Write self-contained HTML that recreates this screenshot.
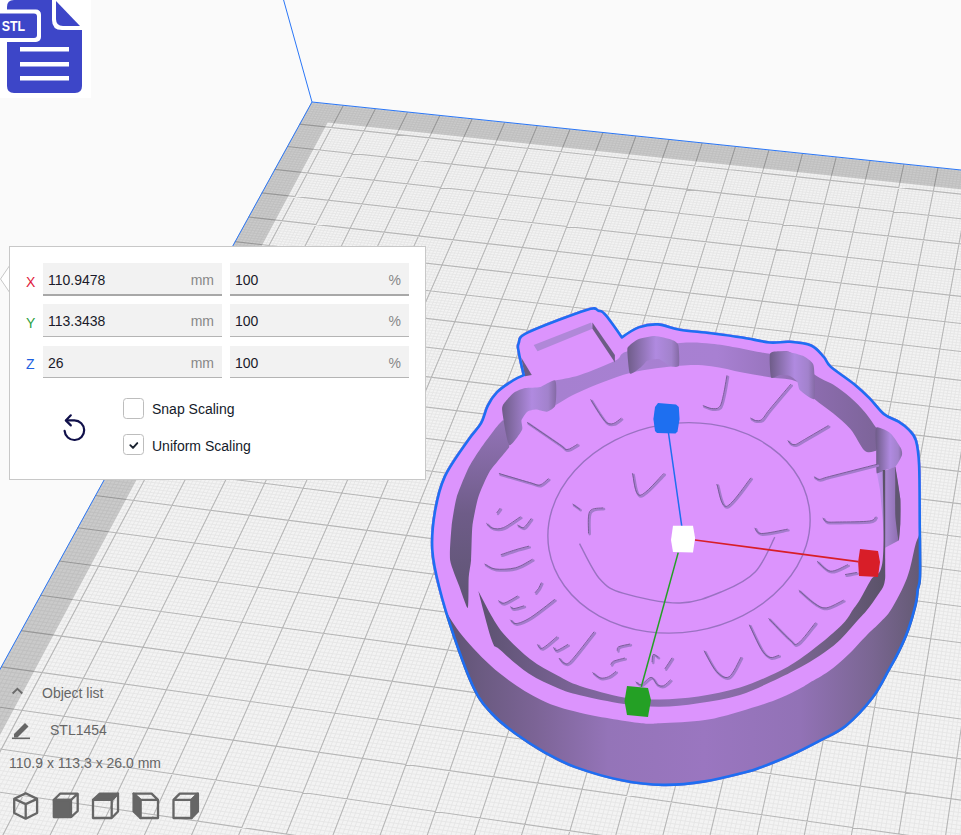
<!DOCTYPE html>
<html><head><meta charset="utf-8"><style>
html,body{margin:0;padding:0;width:961px;height:835px;overflow:hidden;background:#fafafa;font-family:"Liberation Sans",sans-serif;}
.abs{position:absolute;}
#panel{position:absolute;left:9px;top:246px;width:415px;height:232px;background:#fff;border:1px solid #c8c8c8;}
.fld{position:absolute;height:31px;background:#f2f2f2;border-bottom:2px solid #c4c4c4;box-sizing:content-box;}
.fld .v{position:absolute;left:5px;top:9px;font-size:14px;color:#1a1a2a;}
.fld .u{position:absolute;right:8px;top:9px;font-size:14px;color:#888;}
.lbl{position:absolute;font-size:14px;}
.cb{position:absolute;width:19px;height:19px;border:1.3px solid #bdbdbd;border-radius:3.5px;background:#fff;}
.ct{position:absolute;font-size:14px;color:#141a2a;}
.bl{position:absolute;font-size:14px;color:#666;}
</style></head><body>
<svg width="961" height="835" style="position:absolute;left:0;top:0">
<rect width="961" height="835" fill="#fafafa"/>
<polygon points="311.4,102.3 1684.1,245.8 2061.7,2282.7 -586.1,1735.0" fill="#f3f3f3"/>
<path d="M314.6 102.6L-580.4 1736.2M310.2 104.5L1684.6 248.3M317.8 103.0L-574.7 1737.4M309.0 106.6L1685.1 250.8M321.0 103.3L-569.0 1738.5M307.8 108.8L1685.5 253.3M324.1 103.6L-563.2 1739.7M306.6 111.0L1686.0 255.8M327.3 104.0L-557.5 1740.9M305.4 113.2L1686.5 258.4M330.5 104.3L-551.7 1742.1M304.2 115.3L1686.9 260.9M333.7 104.6L-546.0 1743.3M303.0 117.5L1687.4 263.5M336.9 105.0L-540.3 1744.5M301.8 119.7L1687.9 266.0M340.1 105.3L-534.5 1745.7M300.6 121.9L1688.4 268.6M346.5 106.0L-523.0 1748.1M298.2 126.4L1689.3 273.7M349.7 106.3L-517.2 1749.2M297.0 128.6L1689.8 276.3M352.9 106.6L-511.4 1750.4M295.7 130.8L1690.3 278.9M356.1 107.0L-505.7 1751.6M294.5 133.0L1690.7 281.5M359.3 107.3L-499.9 1752.8M293.3 135.3L1691.2 284.1M362.5 107.7L-494.1 1754.0M292.0 137.5L1691.7 286.7M365.7 108.0L-488.3 1755.2M290.8 139.7L1692.2 289.3M368.9 108.3L-482.5 1756.4M289.6 142.0L1692.7 291.9M372.1 108.7L-476.7 1757.6M288.3 144.2L1693.2 294.6M378.5 109.3L-465.1 1760.0M285.9 148.8L1694.1 299.8M381.8 109.7L-459.3 1761.2M284.6 151.0L1694.6 302.5M385.0 110.0L-453.5 1762.4M283.3 153.3L1695.1 305.2M388.2 110.3L-447.7 1763.6M282.1 155.6L1695.6 307.8M391.4 110.7L-441.9 1764.8M280.8 157.9L1696.1 310.5M394.6 111.0L-436.1 1766.0M279.6 160.2L1696.6 313.2M397.8 111.3L-430.2 1767.2M278.3 162.5L1697.1 315.8M401.0 111.7L-424.4 1768.4M277.0 164.8L1697.6 318.5M404.3 112.0L-418.6 1769.7M275.8 167.1L1698.1 321.2M410.7 112.7L-406.9 1772.1M273.2 171.7L1699.1 326.7M413.9 113.0L-401.1 1773.3M271.9 174.1L1699.6 329.4M417.1 113.4L-395.2 1774.5M270.7 176.4L1700.1 332.1M420.4 113.7L-389.3 1775.7M269.4 178.7L1700.6 334.8M423.6 114.0L-383.5 1776.9M268.1 181.1L1701.1 337.6M426.8 114.4L-377.6 1778.1M266.8 183.4L1701.7 340.3M430.0 114.7L-371.8 1779.3M265.5 185.8L1702.2 343.1M433.3 115.0L-365.9 1780.6M264.2 188.1L1702.7 345.8M436.5 115.4L-360.0 1781.8M262.9 190.5L1703.2 348.6M443.0 116.1L-348.3 1784.2M260.3 195.3L1704.2 354.2M446.2 116.4L-342.4 1785.4M259.0 197.7L1704.7 357.0M449.4 116.7L-336.5 1786.6M257.7 200.0L1705.3 359.8M452.7 117.1L-330.6 1787.9M256.3 202.4L1705.8 362.6M455.9 117.4L-324.7 1789.1M255.0 204.8L1706.3 365.4M459.2 117.7L-318.8 1790.3M253.7 207.3L1706.8 368.2M462.4 118.1L-312.9 1791.5M252.4 209.7L1707.3 371.1M465.6 118.4L-307.0 1792.7M251.0 212.1L1707.9 373.9M468.9 118.8L-301.1 1794.0M249.7 214.5L1708.4 376.7M475.4 119.4L-289.2 1796.4M247.0 219.4L1709.5 382.5M478.6 119.8L-283.3 1797.6M245.7 221.8L1710.0 385.3M481.9 120.1L-277.4 1798.9M244.3 224.3L1710.5 388.2M485.1 120.5L-271.4 1800.1M243.0 226.7L1711.1 391.1M488.3 120.8L-265.5 1801.3M241.6 229.2L1711.6 394.0M491.6 121.1L-259.5 1802.6M240.3 231.7L1712.1 396.9M494.9 121.5L-253.6 1803.8M238.9 234.2L1712.7 399.8M498.1 121.8L-247.6 1805.0M237.5 236.6L1713.2 402.7M501.4 122.2L-241.7 1806.2M236.2 239.1L1713.8 405.6M507.9 122.8L-229.8 1808.7M233.4 244.1L1714.8 411.5M511.1 123.2L-223.8 1809.9M232.1 246.6L1715.4 414.5M514.4 123.5L-217.8 1811.2M230.7 249.2L1715.9 417.4M517.6 123.9L-211.8 1812.4M229.3 251.7L1716.5 420.4M520.9 124.2L-205.9 1813.7M227.9 254.2L1717.0 423.4M524.2 124.5L-199.9 1814.9M226.5 256.7L1717.6 426.3M527.4 124.9L-193.9 1816.1M225.1 259.3L1718.1 429.3M530.7 125.2L-187.9 1817.4M223.7 261.8L1718.7 432.3M534.0 125.6L-181.9 1818.6M222.3 264.4L1719.3 435.3M540.5 126.3L-169.9 1821.1M219.5 269.5L1720.4 441.4M543.8 126.6L-163.9 1822.3M218.1 272.1L1720.9 444.4M547.0 126.9L-157.9 1823.6M216.6 274.7L1721.5 447.4M550.3 127.3L-151.9 1824.8M215.2 277.2L1722.1 450.5M553.6 127.6L-145.8 1826.1M213.8 279.8L1722.6 453.5M556.8 128.0L-139.8 1827.3M212.4 282.4L1723.2 456.6M560.1 128.3L-133.8 1828.6M210.9 285.0L1723.8 459.7M563.4 128.6L-127.7 1829.8M209.5 287.7L1724.3 462.8M566.7 129.0L-121.7 1831.1M208.1 290.3L1724.9 465.9M573.2 129.7L-109.6 1833.6M205.2 295.5L1726.1 472.1M576.5 130.0L-103.6 1834.8M203.7 298.2L1726.7 475.2M579.8 130.4L-97.5 1836.1M202.3 300.8L1727.2 478.3M583.1 130.7L-91.4 1837.3M200.8 303.5L1727.8 481.5M586.4 131.0L-85.4 1838.6M199.3 306.1L1728.4 484.6M589.7 131.4L-79.3 1839.8M197.9 308.8L1729.0 487.8M592.9 131.7L-73.2 1841.1M196.4 311.5L1729.6 490.9M596.2 132.1L-67.2 1842.3M194.9 314.2L1730.2 494.1M599.5 132.4L-61.1 1843.6M193.4 316.9L1730.7 497.3M606.1 133.1L-48.9 1846.1M190.5 322.3L1731.9 503.7M609.4 133.5L-42.8 1847.4M189.0 325.0L1732.5 506.9M612.7 133.8L-36.7 1848.6M187.5 327.7L1733.1 510.1M616.0 134.1L-30.6 1849.9M186.0 330.4L1733.7 513.3M619.3 134.5L-24.5 1851.2M184.5 333.1L1734.3 516.6M622.6 134.8L-18.4 1852.4M183.0 335.9L1734.9 519.8M625.9 135.2L-12.3 1853.7M181.5 338.6L1735.5 523.1M629.2 135.5L-6.2 1855.0M180.0 341.4L1736.1 526.3M632.5 135.9L-0.0 1856.2M178.4 344.1L1736.7 529.6M639.1 136.6L12.2 1858.8M175.4 349.7L1738.0 536.2M642.4 136.9L18.4 1860.0M173.9 352.5L1738.6 539.5M645.7 137.2L24.5 1861.3M172.3 355.3L1739.2 542.8M649.0 137.6L30.6 1862.6M170.8 358.1L1739.8 546.1M652.3 137.9L36.8 1863.9M169.3 360.9L1740.4 549.4M655.6 138.3L42.9 1865.1M167.7 363.7L1741.0 552.8M658.9 138.6L49.1 1866.4M166.2 366.5L1741.7 556.1M662.2 139.0L55.3 1867.7M164.6 369.3L1742.3 559.5M665.6 139.3L61.4 1869.0M163.0 372.2L1742.9 562.9M672.2 140.0L73.8 1871.5M159.9 377.9L1744.2 569.6M675.5 140.4L80.0 1872.8M158.3 380.7L1744.8 573.0M678.8 140.7L86.1 1874.1M156.8 383.6L1745.4 576.5M682.1 141.1L92.3 1875.3M155.2 386.5L1746.1 579.9M685.5 141.4L98.5 1876.6M153.6 389.4L1746.7 583.3M688.8 141.7L104.7 1877.9M152.0 392.2L1747.3 586.7M692.1 142.1L110.9 1879.2M150.4 395.1L1748.0 590.2M695.4 142.4L117.1 1880.5M148.8 398.1L1748.6 593.7M698.8 142.8L123.3 1881.8M147.2 401.0L1749.3 597.1M705.4 143.5L135.8 1884.3M144.0 406.8L1750.5 604.1M708.7 143.8L142.0 1885.6M142.4 409.8L1751.2 607.6M712.1 144.2L148.2 1886.9M140.8 412.7L1751.9 611.1M715.4 144.5L154.5 1888.2M139.1 415.7L1752.5 614.7M718.7 144.9L160.7 1889.5M137.5 418.6L1753.2 618.2M722.1 145.2L166.9 1890.8M135.9 421.6L1753.8 621.7M725.4 145.6L173.2 1892.1M134.2 424.6L1754.5 625.3M728.7 145.9L179.4 1893.4M132.6 427.6L1755.1 628.9M732.1 146.3L185.7 1894.7M130.9 430.6L1755.8 632.4M738.8 147.0L198.2 1897.2M127.6 436.6L1757.1 639.6M742.1 147.3L204.5 1898.5M126.0 439.6L1757.8 643.2M745.4 147.7L210.8 1899.8M124.3 442.6L1758.5 646.9M748.8 148.0L217.0 1901.1M122.6 445.7L1759.1 650.5M752.1 148.4L223.3 1902.4M121.0 448.7L1759.8 654.2M755.5 148.7L229.6 1903.7M119.3 451.8L1760.5 657.8M758.8 149.1L235.9 1905.0M117.6 454.8L1761.2 661.5M762.2 149.4L242.2 1906.3M115.9 457.9L1761.9 665.2M765.5 149.8L248.5 1907.6M114.2 461.0L1762.5 668.8M772.2 150.5L261.1 1910.3M110.8 467.2L1763.9 676.3M775.6 150.8L267.4 1911.6M109.1 470.3L1764.6 680.0M778.9 151.2L273.7 1912.9M107.4 473.4L1765.3 683.7M782.3 151.5L280.1 1914.2M105.7 476.5L1766.0 687.5M785.6 151.9L286.4 1915.5M103.9 479.7L1766.7 691.2M789.0 152.2L292.7 1916.8M102.2 482.8L1767.4 695.0M792.4 152.6L299.0 1918.1M100.5 486.0L1768.1 698.8M795.7 152.9L305.4 1919.4M98.7 489.1L1768.8 702.6M799.1 153.3L311.7 1920.7M97.0 492.3L1769.5 706.4M805.8 154.0L324.4 1923.4M93.5 498.7L1770.9 714.0M809.2 154.3L330.8 1924.7M91.7 501.9L1771.6 717.9M812.5 154.7L337.2 1926.0M90.0 505.1L1772.4 721.7M815.9 155.0L343.5 1927.3M88.2 508.3L1773.1 725.6M819.3 155.4L349.9 1928.6M86.4 511.5L1773.8 729.5M822.7 155.7L356.3 1929.9M84.7 514.7L1774.5 733.4M826.0 156.1L362.7 1931.3M82.9 518.0L1775.2 737.3M829.4 156.4L369.0 1932.6M81.1 521.2L1776.0 741.2M832.8 156.8L375.4 1933.9M79.3 524.5L1776.7 745.1M839.5 157.5L388.2 1936.6M75.7 531.1L1778.1 753.0M842.9 157.9L394.6 1937.9M73.9 534.4L1778.9 757.0M846.3 158.2L401.0 1939.2M72.1 537.7L1779.6 761.0M849.7 158.6L407.4 1940.5M70.3 541.0L1780.4 764.9M853.1 158.9L413.9 1941.9M68.4 544.3L1781.1 768.9M856.4 159.3L420.3 1943.2M66.6 547.6L1781.8 773.0M859.8 159.6L426.7 1944.5M64.8 551.0L1782.6 777.0M863.2 160.0L433.1 1945.8M62.9 554.3L1783.3 781.0M866.6 160.3L439.6 1947.2M61.1 557.7L1784.1 785.1M873.4 161.0L452.5 1949.8M57.4 564.4L1785.6 793.2M876.8 161.4L458.9 1951.2M55.5 567.8L1786.4 797.3M880.2 161.7L465.4 1952.5M53.6 571.2L1787.1 801.5M883.6 162.1L471.8 1953.8M51.8 574.6L1787.9 805.6M886.9 162.5L478.3 1955.2M49.9 578.0L1788.7 809.7M890.3 162.8L484.8 1956.5M48.0 581.5L1789.4 813.9M893.7 163.2L491.2 1957.9M46.1 584.9L1790.2 818.0M897.1 163.5L497.7 1959.2M44.2 588.3L1791.0 822.2M900.5 163.9L504.2 1960.5M42.3 591.8L1791.8 826.4M907.3 164.6L517.2 1963.2M38.5 598.8L1793.3 834.8M910.7 164.9L523.7 1964.6M36.6 602.3L1794.1 839.0M914.1 165.3L530.2 1965.9M34.6 605.8L1794.9 843.3M917.6 165.7L536.7 1967.3M32.7 609.3L1795.7 847.6M921.0 166.0L543.2 1968.6M30.8 612.8L1796.5 851.8M924.4 166.4L549.7 1970.0M28.8 616.3L1797.3 856.1M927.8 166.7L556.2 1971.3M26.9 619.9L1798.1 860.4M931.2 167.1L562.8 1972.7M24.9 623.4L1798.9 864.7M934.6 167.4L569.3 1974.0M23.0 627.0L1799.7 869.1M941.4 168.2L582.4 1976.7M19.0 634.2L1801.3 877.8M944.8 168.5L588.9 1978.1M17.0 637.8L1802.1 882.2M948.3 168.9L595.5 1979.4M15.1 641.4L1802.9 886.5M951.7 169.2L602.0 1980.8M13.1 645.0L1803.7 890.9M955.1 169.6L608.6 1982.1M11.1 648.6L1804.5 895.4M958.5 169.9L615.1 1983.5M9.1 652.3L1805.4 899.8M961.9 170.3L621.7 1984.8M7.1 655.9L1806.2 904.2M965.4 170.7L628.3 1986.2M5.0 659.6L1807.0 908.7M968.8 171.0L634.8 1987.6M3.0 663.3L1807.8 913.2M975.7 171.7L648.0 1990.3M-1.0 670.6L1809.5 922.2M979.1 172.1L654.6 1991.7M-3.1 674.4L1810.4 926.7M982.5 172.4L661.2 1993.0M-5.1 678.1L1811.2 931.3M985.9 172.8L667.8 1994.4M-7.2 681.8L1812.0 935.8M989.4 173.2L674.4 1995.8M-9.2 685.6L1812.9 940.4M992.8 173.5L681.0 1997.1M-11.3 689.3L1813.7 945.0M996.2 173.9L687.6 1998.5M-13.4 693.1L1814.6 949.6M999.7 174.2L694.3 1999.9M-15.5 696.9L1815.4 954.2M1003.1 174.6L700.9 2001.2M-17.5 700.7L1816.3 958.8M1010.0 175.3L714.1 2004.0M-21.7 708.3L1818.0 968.2M1013.4 175.7L720.8 2005.3M-23.8 712.1L1818.9 972.8M1016.9 176.0L727.4 2006.7M-25.9 715.9L1819.8 977.5M1020.3 176.4L734.1 2008.1M-28.1 719.8L1820.6 982.3M1023.8 176.8L740.7 2009.5M-30.2 723.7L1821.5 987.0M1027.2 177.1L747.4 2010.9M-32.3 727.5L1822.4 991.8M1030.7 177.5L754.1 2012.2M-34.5 731.4L1823.3 996.5M1034.1 177.8L760.7 2013.6M-36.6 735.3L1824.2 1001.3M1037.6 178.2L767.4 2015.0M-38.7 739.2L1825.1 1006.1M1044.5 178.9L780.8 2017.8M-43.1 747.1L1826.9 1015.8M1047.9 179.3L787.5 2019.1M-45.2 751.1L1827.8 1020.6M1051.4 179.6L794.2 2020.5M-47.4 755.0L1828.7 1025.5M1054.8 180.0L800.8 2021.9M-49.6 759.0L1829.6 1030.4M1058.3 180.4L807.6 2023.3M-51.8 763.0L1830.5 1035.3M1061.8 180.7L814.3 2024.7M-54.0 767.0L1831.4 1040.2M1065.2 181.1L821.0 2026.1M-56.2 771.0L1832.3 1045.1M1068.7 181.4L827.7 2027.5M-58.4 775.0L1833.2 1050.1M1072.1 181.8L834.4 2028.9M-60.6 779.1L1834.1 1055.0M1079.1 182.5L847.9 2031.6M-65.1 787.2L1836.0 1065.0M1082.5 182.9L854.6 2033.0M-67.4 791.3L1836.9 1070.1M1086.0 183.3L861.4 2034.4M-69.6 795.4L1837.9 1075.1M1089.5 183.6L868.1 2035.8M-71.9 799.5L1838.8 1080.2M1093.0 184.0L874.9 2037.2M-74.1 803.6L1839.7 1085.3M1096.4 184.3L881.6 2038.6M-76.4 807.7L1840.7 1090.4M1099.9 184.7L888.4 2040.0M-78.7 811.9L1841.6 1095.5M1103.4 185.1L895.1 2041.4M-81.0 816.0L1842.6 1100.6M1106.9 185.4L901.9 2042.8M-83.3 820.2L1843.5 1105.8M1113.8 186.2L915.5 2045.6M-87.9 828.6L1845.5 1116.1M1117.3 186.5L922.3 2047.0M-90.2 832.8L1846.4 1121.4M1120.8 186.9L929.1 2048.4M-92.5 837.0L1847.4 1126.6M1124.3 187.3L935.9 2049.8M-94.8 841.3L1848.4 1131.8M1127.7 187.6L942.7 2051.2M-97.2 845.5L1849.4 1137.1M1131.2 188.0L949.5 2052.7M-99.5 849.8L1850.3 1142.4M1134.7 188.3L956.3 2054.1M-101.9 854.1L1851.3 1147.7M1138.2 188.7L963.1 2055.5M-104.3 858.4L1852.3 1153.0M1141.7 189.1L969.9 2056.9M-106.6 862.7L1853.3 1158.4M1148.7 189.8L983.6 2059.7M-111.4 871.4L1855.3 1169.2M1152.2 190.2L990.4 2061.1M-113.8 875.8L1856.3 1174.6M1155.7 190.5L997.3 2062.5M-116.2 880.1L1857.3 1180.0M1159.2 190.9L1004.1 2064.0M-118.6 884.5L1858.3 1185.4M1162.7 191.3L1011.0 2065.4M-121.0 888.9L1859.3 1190.9M1166.2 191.6L1017.8 2066.8M-123.5 893.3L1860.3 1196.4M1169.7 192.0L1024.7 2068.2M-125.9 897.8L1861.4 1201.9M1173.2 192.4L1031.6 2069.6M-128.3 902.2L1862.4 1207.4M1176.7 192.7L1038.4 2071.1M-130.8 906.7L1863.4 1213.0M1183.7 193.5L1052.2 2073.9M-135.7 915.6L1865.5 1224.2M1187.2 193.8L1059.1 2075.3M-138.2 920.2L1866.5 1229.8M1190.7 194.2L1066.0 2076.8M-140.7 924.7L1867.6 1235.4M1194.2 194.6L1072.9 2078.2M-143.2 929.2L1868.6 1241.1M1197.7 194.9L1079.8 2079.6M-145.7 933.8L1869.7 1246.8M1201.2 195.3L1086.7 2081.0M-148.2 938.3L1870.7 1252.5M1204.7 195.7L1093.6 2082.5M-150.7 942.9L1871.8 1258.2M1208.3 196.0L1100.5 2083.9M-153.3 947.5L1872.9 1263.9M1211.8 196.4L1107.5 2085.3M-155.8 952.1L1873.9 1269.7M1218.8 197.1L1121.3 2088.2M-160.9 961.4L1876.1 1281.3M1222.3 197.5L1128.3 2089.6M-163.5 966.1L1877.2 1287.1M1225.8 197.9L1135.2 2091.1M-166.0 970.8L1878.2 1293.0M1229.4 198.2L1142.2 2092.5M-168.6 975.5L1879.3 1298.9M1232.9 198.6L1149.1 2094.0M-171.2 980.2L1880.4 1304.8M1236.4 199.0L1156.1 2095.4M-173.8 984.9L1881.5 1310.7M1239.9 199.3L1163.1 2096.8M-176.4 989.7L1882.6 1316.7M1243.5 199.7L1170.0 2098.3M-179.0 994.4L1883.7 1322.6M1247.0 200.1L1177.0 2099.7M-181.7 999.2L1884.9 1328.6M1254.1 200.8L1191.0 2102.6M-186.9 1008.8L1887.1 1340.7M1257.6 201.2L1198.0 2104.1M-189.6 1013.7L1888.2 1346.8M1261.1 201.6L1205.0 2105.5M-192.3 1018.5L1889.3 1352.9M1264.7 201.9L1212.0 2107.0M-194.9 1023.4L1890.5 1359.0M1268.2 202.3L1219.0 2108.4M-197.6 1028.2L1891.6 1365.1M1271.7 202.7L1226.0 2109.9M-200.3 1033.1L1892.8 1371.3M1275.3 203.0L1233.0 2111.3M-203.0 1038.1L1893.9 1377.5M1278.8 203.4L1240.0 2112.8M-205.7 1043.0L1895.1 1383.7M1282.4 203.8L1247.1 2114.2M-208.5 1048.0L1896.2 1389.9M1289.5 204.5L1261.1 2117.1M-213.9 1057.9L1898.5 1402.5M1293.0 204.9L1268.2 2118.6M-216.7 1062.9L1899.7 1408.8M1296.6 205.3L1275.2 2120.0M-219.5 1067.9L1900.9 1415.2M1300.1 205.6L1282.3 2121.5M-222.2 1073.0L1902.1 1421.5M1303.7 206.0L1289.4 2123.0M-225.0 1078.0L1903.3 1427.9M1307.2 206.4L1296.4 2124.4M-227.8 1083.1L1904.4 1434.3M1310.8 206.7L1303.5 2125.9M-230.6 1088.2L1905.6 1440.8M1314.3 207.1L1310.6 2127.4M-233.4 1093.3L1906.8 1447.3M1317.9 207.5L1317.7 2128.8M-236.2 1098.5L1908.0 1453.8M1325.0 208.2L1331.8 2131.8M-241.9 1108.8L1910.5 1466.8M1328.5 208.6L1338.9 2133.2M-244.8 1114.0L1911.7 1473.4M1332.1 209.0L1346.0 2134.7M-247.6 1119.2L1912.9 1480.0M1335.7 209.4L1353.2 2136.2M-250.5 1124.4L1914.1 1486.7M1339.2 209.7L1360.3 2137.6M-253.4 1129.7L1915.4 1493.3M1342.8 210.1L1367.4 2139.1M-256.3 1134.9L1916.6 1500.0M1346.4 210.5L1374.5 2140.6M-259.2 1140.2L1917.9 1506.7M1349.9 210.8L1381.7 2142.1M-262.1 1145.5L1919.1 1513.5M1353.5 211.2L1388.8 2143.5M-265.0 1150.9L1920.4 1520.2M1360.7 212.0L1403.1 2146.5M-270.9 1161.6L1922.9 1533.9M1364.2 212.3L1410.2 2148.0M-273.9 1167.0L1924.2 1540.7M1367.8 212.7L1417.4 2149.4M-276.9 1172.4L1925.4 1547.6M1371.4 213.1L1424.6 2150.9M-279.8 1177.8L1926.7 1554.5M1375.0 213.5L1431.7 2152.4M-282.8 1183.2L1928.0 1561.5M1378.5 213.8L1438.9 2153.9M-285.8 1188.7L1929.3 1568.4M1382.1 214.2L1446.1 2155.4M-288.9 1194.2L1930.6 1575.4M1385.7 214.6L1453.3 2156.9M-291.9 1199.7L1931.9 1582.5M1389.3 215.0L1460.5 2158.4M-294.9 1205.2L1933.2 1589.5M1396.4 215.7L1474.9 2161.3M-301.0 1216.4L1935.9 1603.8M1400.0 216.1L1482.1 2162.8M-304.1 1222.0L1937.2 1610.9M1403.6 216.5L1489.3 2164.3M-307.2 1227.6L1938.5 1618.1M1407.2 216.8L1496.5 2165.8M-310.3 1233.2L1939.8 1625.3M1410.8 217.2L1503.7 2167.3M-313.4 1238.9L1941.2 1632.6M1414.4 217.6L1511.0 2168.8M-316.5 1244.5L1942.5 1639.9M1418.0 218.0L1518.2 2170.3M-319.7 1250.2L1943.9 1647.2M1421.6 218.3L1525.4 2171.8M-322.8 1256.0L1945.3 1654.5M1425.2 218.7L1532.7 2173.3M-326.0 1261.7L1946.6 1661.9M1432.4 219.5L1547.2 2176.3M-332.3 1273.3L1949.4 1676.7M1436.0 219.8L1554.4 2177.8M-335.5 1279.1L1950.8 1684.2M1439.6 220.2L1561.7 2179.3M-338.7 1284.9L1952.2 1691.7M1443.2 220.6L1569.0 2180.8M-341.9 1290.8L1953.6 1699.2M1446.8 221.0L1576.3 2182.3M-345.2 1296.6L1955.0 1706.8M1450.4 221.3L1583.6 2183.8M-348.4 1302.5L1956.4 1714.4M1454.0 221.7L1590.8 2185.3M-351.7 1308.5L1957.8 1722.1M1457.6 222.1L1598.1 2186.8M-354.9 1314.4L1959.2 1729.7M1461.2 222.5L1605.4 2188.3M-358.2 1320.4L1960.6 1737.4M1468.5 223.2L1620.1 2191.4M-364.8 1332.4L1963.5 1753.0M1472.1 223.6L1627.4 2192.9M-368.2 1338.4L1965.0 1760.8M1475.7 224.0L1634.7 2194.4M-371.5 1344.5L1966.4 1768.6M1479.3 224.4L1642.0 2195.9M-374.8 1350.6L1967.9 1776.5M1482.9 224.7L1649.4 2197.4M-378.2 1356.7L1969.3 1784.4M1486.5 225.1L1656.7 2199.0M-381.6 1362.9L1970.8 1792.4M1490.2 225.5L1664.1 2200.5M-385.0 1369.0L1972.3 1800.4M1493.8 225.9L1671.4 2202.0M-388.4 1375.2L1973.8 1808.4M1497.4 226.3L1678.8 2203.5M-391.8 1381.4L1975.3 1816.4M1504.7 227.0L1693.5 2206.6M-398.6 1393.9L1978.3 1832.7M1508.3 227.4L1700.9 2208.1M-402.1 1400.2L1979.8 1840.8M1511.9 227.8L1708.3 2209.6M-405.6 1406.5L1981.3 1849.1M1515.6 228.1L1715.7 2211.1M-409.1 1412.9L1982.9 1857.3M1519.2 228.5L1723.0 2212.7M-412.6 1419.2L1984.4 1865.6M1522.8 228.9L1730.4 2214.2M-416.1 1425.6L1985.9 1873.9M1526.5 229.3L1737.8 2215.7M-419.6 1432.0L1987.5 1882.3M1530.1 229.7L1745.3 2217.3M-423.1 1438.5L1989.0 1890.7M1533.7 230.0L1752.7 2218.8M-426.7 1444.9L1990.6 1899.1M1541.0 230.8L1767.5 2221.9M-433.9 1458.0L1993.8 1916.1M1544.7 231.2L1775.0 2223.4M-437.5 1464.5L1995.3 1924.7M1548.3 231.6L1782.4 2225.0M-441.1 1471.1L1996.9 1933.3M1551.9 232.0L1789.8 2226.5M-444.7 1477.7L1998.5 1941.9M1555.6 232.3L1797.3 2228.0M-448.3 1484.3L2000.1 1950.6M1559.2 232.7L1804.7 2229.6M-452.0 1491.0L2001.8 1959.3M1562.9 233.1L1812.2 2231.1M-455.7 1497.7L2003.4 1968.1M1566.5 233.5L1819.7 2232.7M-459.4 1504.4L2005.0 1976.9M1570.2 233.9L1827.1 2234.2M-463.1 1511.1L2006.7 1985.8M1577.5 234.6L1842.1 2237.3M-470.5 1524.7L2010.0 2003.6M1581.2 235.0L1849.6 2238.9M-474.3 1531.5L2011.6 2012.6M1584.8 235.4L1857.1 2240.4M-478.1 1538.4L2013.3 2021.6M1588.5 235.8L1864.6 2242.0M-481.8 1545.2L2015.0 2030.7M1592.1 236.2L1872.1 2243.5M-485.6 1552.2L2016.7 2039.8M1595.8 236.5L1879.6 2245.1M-489.5 1559.1L2018.4 2048.9M1599.5 236.9L1887.1 2246.6M-493.3 1566.1L2020.1 2058.1M1603.1 237.3L1894.7 2248.2M-497.1 1573.1L2021.8 2067.4M1606.8 237.7L1902.2 2249.7M-501.0 1580.1L2023.5 2076.6M1614.1 238.5L1917.3 2252.9M-508.8 1594.3L2027.0 2095.4M1617.8 238.8L1924.8 2254.4M-512.7 1601.4L2028.7 2104.8M1621.5 239.2L1932.4 2256.0M-516.6 1608.5L2030.5 2114.2M1625.2 239.6L1939.9 2257.5M-520.6 1615.7L2032.2 2123.8M1628.8 240.0L1947.5 2259.1M-524.5 1622.9L2034.0 2133.3M1632.5 240.4L1955.1 2260.7M-528.5 1630.2L2035.8 2142.9M1636.2 240.8L1962.7 2262.2M-532.5 1637.4L2037.6 2152.6M1639.9 241.1L1970.2 2263.8M-536.5 1644.8L2039.4 2162.3M1643.5 241.5L1977.8 2265.4M-540.6 1652.1L2041.2 2172.1M1650.9 242.3L1993.0 2268.5M-548.7 1666.9L2044.8 2191.7M1654.6 242.7L2000.6 2270.1M-552.8 1674.3L2046.7 2201.6M1658.3 243.1L2008.2 2271.7M-556.9 1681.8L2048.5 2211.6M1662.0 243.4L2015.9 2273.2M-561.0 1689.3L2050.4 2221.6M1665.7 243.8L2023.5 2274.8M-565.2 1696.8L2052.2 2231.7M1669.3 244.2L2031.1 2276.4M-569.3 1704.4L2054.1 2241.8M1673.0 244.6L2038.8 2278.0M-573.5 1712.0L2056.0 2251.9M1676.7 245.0L2046.4 2279.6M-577.7 1719.6L2057.9 2262.1M1680.4 245.4L2054.1 2281.1M-581.9 1727.3L2059.8 2272.4" stroke="#e5e5e5" stroke-width="0.9" fill="none"/>
<path d="M343.3 105.6L-528.7 1746.9M299.4 124.1L1688.8 271.2M375.3 109.0L-470.9 1758.8M287.1 146.5L1693.7 297.2M407.5 112.3L-412.7 1770.9M274.5 169.4L1698.6 323.9M439.7 115.7L-354.1 1783.0M261.6 192.9L1703.7 351.4M472.1 119.1L-295.1 1795.2M248.4 217.0L1708.9 379.6M504.6 122.5L-235.7 1807.5M234.8 241.6L1714.3 408.6M537.2 125.9L-175.9 1819.9M220.9 266.9L1719.8 438.3M570.0 129.3L-115.7 1832.3M206.6 292.9L1725.5 469.0M602.8 132.8L-55.0 1844.9M192.0 319.6L1731.3 500.5M635.8 136.2L6.1 1857.5M176.9 346.9L1737.3 532.9M668.9 139.7L67.6 1870.2M161.5 375.0L1743.5 566.3M702.1 143.1L129.6 1883.0M145.6 403.9L1749.9 600.6M735.4 146.6L192.0 1895.9M129.3 433.6L1756.5 636.0M768.9 150.1L254.8 1908.9M112.5 464.1L1763.2 672.5M802.5 153.6L318.1 1922.0M95.3 495.5L1770.2 710.2M836.2 157.1L381.8 1935.2M77.5 527.8L1777.4 749.1M870.0 160.7L446.0 1948.5M59.2 561.0L1784.9 789.2M903.9 164.2L510.7 1961.9M40.4 595.3L1792.5 830.6M938.0 167.8L575.8 1975.4M21.0 630.6L1800.5 873.4M972.2 171.4L641.4 1988.9M1.0 666.9L1808.7 917.7M1006.6 175.0L707.5 2002.6M-19.6 704.5L1817.2 963.5M1041.0 178.6L774.1 2016.4M-40.9 743.2L1826.0 1010.9M1075.6 182.2L841.1 2030.2M-62.9 783.1L1835.1 1060.0M1110.3 185.8L908.7 2044.2M-85.6 824.4L1844.5 1111.0M1145.2 189.4L976.8 2058.3M-109.0 867.0L1854.3 1163.8M1180.2 193.1L1045.3 2072.5M-133.3 911.1L1864.4 1218.6M1215.3 196.8L1114.4 2086.8M-158.3 956.8L1875.0 1275.5M1250.5 200.5L1184.0 2101.2M-184.3 1004.0L1886.0 1334.7M1285.9 204.2L1254.1 2115.7M-211.2 1052.9L1897.4 1396.2M1321.4 207.9L1324.8 2130.3M-239.1 1103.6L1909.3 1460.3M1357.1 211.6L1395.9 2145.0M-268.0 1156.2L1921.6 1527.0M1392.9 215.3L1467.7 2159.8M-298.0 1210.8L1934.5 1596.6M1428.8 219.1L1539.9 2174.8M-329.1 1267.5L1948.0 1669.3M1464.8 222.8L1612.8 2189.9M-361.5 1326.4L1962.1 1745.2M1501.0 226.6L1686.1 2205.0M-395.2 1387.7L1976.8 1824.5M1537.4 230.4L1760.1 2220.3M-430.3 1451.4L1992.2 1907.6M1573.9 234.2L1834.6 2235.8M-466.8 1517.9L2008.3 1994.7M1610.5 238.1L1909.7 2251.3M-504.9 1587.2L2025.2 2086.0M1647.2 241.9L1985.4 2267.0M-544.6 1659.5L2043.0 2181.9" stroke="#b6b6b6" stroke-width="1.1" fill="none"/>
<path d="M311.4 102.3 L1684.1 245.8 L2061.7 2282.7 L-586.1 1735.0Z M327.6 122.5 L-540.3 1744.5 L2061.7 2282.7 L1687.9 266.0Z" fill="rgba(0,0,0,0.17)" fill-rule="evenodd"/>
<path d="M1684.1 245.8L312 102L-586.1 1735.0M283.6 0L312 102" stroke="#2a76f6" stroke-width="1" fill="none"/>
<defs>
<linearGradient id="wall" x1="440" y1="0" x2="920" y2="0" gradientUnits="userSpaceOnUse">
<stop offset="0" stop-color="#5c5270"/><stop offset="0.08" stop-color="#6a5a80"/><stop offset="0.2" stop-color="#7c6496"/><stop offset="0.35" stop-color="#9474b8"/><stop offset="0.55" stop-color="#9a76c0"/><stop offset="0.75" stop-color="#9272b6"/><stop offset="0.9" stop-color="#7a6692"/><stop offset="1" stop-color="#645a74"/></linearGradient>
<linearGradient id="band2" x1="478" y1="0" x2="886" y2="0" gradientUnits="userSpaceOnUse">
<stop offset="0" stop-color="#5c5270"/><stop offset="0.25" stop-color="#7c6498"/><stop offset="0.5" stop-color="#9070b4"/><stop offset="0.75" stop-color="#806898"/><stop offset="1" stop-color="#5a5268"/></linearGradient>
<linearGradient id="bwall" x1="555" y1="0" x2="880" y2="0" gradientUnits="userSpaceOnUse">
<stop offset="0" stop-color="#a680d0"/><stop offset="0.5" stop-color="#a880d2"/><stop offset="0.8" stop-color="#8c6cae"/><stop offset="1" stop-color="#7c6498"/></linearGradient>
<linearGradient id="cres" x1="0" y1="420" x2="0" y2="608" gradientUnits="userSpaceOnUse">
<stop offset="0" stop-color="#9474b8"/><stop offset="0.5" stop-color="#6e5c88"/><stop offset="1" stop-color="#5e5472"/></linearGradient>
<linearGradient id="rw" x1="877" y1="0" x2="900" y2="0" gradientUnits="userSpaceOnUse">
<stop offset="0" stop-color="#c590f2"/><stop offset="0.4" stop-color="#a886d0"/><stop offset="1" stop-color="#8a6cac"/></linearGradient>
<linearGradient id="post" x1="0" y1="0" x2="1" y2="0">
<stop offset="0" stop-color="#6e5c88"/><stop offset="0.55" stop-color="#b08ae0"/><stop offset="0.85" stop-color="#a282cc"/><stop offset="1" stop-color="#846aa4"/></linearGradient>
</defs>
<path d="M517.5 342.5C519.2 339.0 516.0 336.8 527.5 331.2C539.0 325.6 574.3 312.3 586.2 308.7C598.1 305.1 595.4 308.6 598.7 309.4C602.0 310.2 602.2 309.2 606.2 313.7C610.2 318.2 622.4 336.2 622.4 336.2C622.4 336.2 632.4 328.4 638.3 326.2C644.2 324.0 651.0 322.7 658.0 323.1C665.0 323.5 671.1 327.0 680.0 328.5C688.9 330.0 700.8 330.6 711.2 331.9C721.6 333.2 732.6 334.6 742.4 336.2C752.2 337.8 762.0 340.5 769.9 341.2C777.8 341.9 783.0 340.0 790.0 340.5C797.0 341.0 805.9 341.8 811.6 344.3C817.4 346.9 821.1 352.2 824.5 355.8C827.9 359.4 826.7 361.3 831.7 365.9C836.7 370.4 848.2 377.8 854.7 383.1C861.2 388.4 865.5 392.5 870.5 397.5C875.5 402.5 880.1 409.5 884.9 413.3C889.7 417.1 895.0 417.9 899.2 420.5C903.4 423.1 907.0 425.9 910.0 429.1C913.0 432.4 915.4 434.0 917.1 440.0C918.8 446.0 919.8 451.7 920.4 465.0C921.0 478.3 920.9 501.7 921.0 520.0C921.1 538.3 921.6 563.3 921.3 575.0C921.0 586.7 919.7 585.1 919.0 590.0C918.3 594.9 918.6 597.7 917.0 604.4C915.4 611.1 912.2 622.3 909.4 630.2C906.6 638.1 903.2 645.4 900.0 652.0C896.8 658.6 894.6 662.2 890.2 670.0C885.8 677.8 880.6 689.1 873.4 698.6C866.1 708.1 855.6 719.5 846.7 726.7C837.8 733.9 829.5 737.0 820.0 742.0C810.5 747.0 800.0 752.5 790.0 757.0C780.0 761.5 767.2 766.3 760.0 769.0C752.8 771.7 755.7 771.0 746.5 773.3C737.3 775.6 718.8 780.6 704.9 782.7C691.0 784.9 677.1 786.4 663.2 786.2C649.3 786.0 636.3 784.6 621.6 781.6C606.9 778.6 587.8 772.9 575.0 768.3C562.2 763.7 554.9 759.6 544.8 753.9C534.7 748.2 523.3 740.8 514.3 734.2C505.3 727.6 497.8 721.9 490.9 714.4C484.0 706.9 479.3 702.2 473.0 689.3C466.7 676.4 458.8 654.1 453.0 637.2C447.2 620.3 441.7 602.3 438.0 587.8C434.3 573.3 431.7 562.7 431.0 550.0C430.3 537.3 431.5 524.1 433.6 511.8C435.7 499.4 438.2 487.9 443.7 475.9C449.2 463.9 460.6 448.9 466.7 440.0C472.8 431.1 476.7 428.3 480.0 422.5C483.3 416.7 483.8 410.5 486.5 405.3C489.2 400.1 491.9 395.6 496.2 391.3C500.5 387.0 507.9 382.1 512.3 379.4C516.7 376.7 522.5 374.9 522.5 374.9C522.5 374.9 518.3 357.8 517.5 352.4C516.7 347.0 515.8 346.0 517.5 342.5Z" fill="url(#wall)"/>
<path d="M517.5 342.5C519.2 339.0 516.0 336.8 527.5 331.2C539.0 325.6 574.3 312.3 586.2 308.7C598.1 305.1 595.4 308.6 598.7 309.4C602.0 310.2 602.2 309.2 606.2 313.7C610.2 318.2 622.4 336.2 622.4 336.2C622.4 336.2 632.4 328.4 638.3 326.2C644.2 324.0 651.0 322.7 658.0 323.1C665.0 323.5 671.1 327.0 680.0 328.5C688.9 330.0 700.8 330.6 711.2 331.9C721.6 333.2 732.6 334.6 742.4 336.2C752.2 337.8 762.0 340.5 769.9 341.2C777.8 341.9 783.0 340.0 790.0 340.5C797.0 341.0 805.9 341.8 811.6 344.3C817.4 346.9 821.1 352.2 824.5 355.8C827.9 359.4 826.7 361.3 831.7 365.9C836.7 370.4 848.2 377.8 854.7 383.1C861.2 388.4 865.5 392.5 870.5 397.5C875.5 402.5 880.1 409.5 884.9 413.3C889.7 417.1 895.0 417.9 899.2 420.5C903.4 423.1 907.0 425.9 910.0 429.1C913.0 432.4 915.4 434.0 917.1 440.0C918.8 446.0 919.8 451.7 920.4 465.0C921.0 478.3 921.2 508.3 921.0 520.0C920.8 531.7 919.9 530.8 919.0 535.0C918.1 539.2 917.4 537.8 915.4 545.0C913.4 552.2 911.0 567.4 907.0 578.0C903.0 588.6 896.1 601.3 891.6 608.7C887.1 616.1 884.1 618.1 880.0 622.5C875.9 626.9 872.4 629.5 867.0 634.9C861.6 640.3 854.3 648.9 847.9 655.0C841.5 661.1 835.1 666.7 828.7 671.3C822.3 675.9 814.4 679.9 809.6 682.8C804.8 685.7 805.7 685.6 800.0 688.5C794.3 691.4 785.4 696.2 775.4 700.0C765.4 703.8 751.7 708.1 740.0 711.4C728.3 714.7 718.3 718.0 705.0 720.0C691.7 722.0 671.2 722.8 660.0 723.2C648.8 723.7 650.8 724.5 637.5 722.7C624.2 721.0 596.0 716.5 580.0 712.7C564.0 708.9 554.5 706.5 541.2 700.0C527.9 693.5 512.5 683.6 500.0 673.6C487.4 663.6 474.9 650.4 465.9 640.0C456.9 629.6 450.6 619.7 446.0 611.0C441.4 602.3 440.5 598.0 438.0 587.8C435.5 577.6 431.7 562.7 431.0 550.0C430.3 537.3 431.5 524.1 433.6 511.8C435.7 499.4 438.2 487.9 443.7 475.9C449.2 463.9 460.6 448.9 466.7 440.0C472.8 431.1 476.7 428.3 480.0 422.5C483.3 416.7 483.8 410.5 486.5 405.3C489.2 400.1 491.9 395.6 496.2 391.3C500.5 387.0 507.9 382.1 512.3 379.4C516.7 376.7 522.5 374.9 522.5 374.9C522.5 374.9 518.3 357.8 517.5 352.4C516.7 347.0 515.8 346.0 517.5 342.5Z" fill="#dc94fd"/>
<path d="M555.4 380.5C559.5 379.6 570.0 378.4 580.0 375.1C590.0 371.8 607.4 364.6 615.4 360.6C623.4 356.6 617.1 354.1 627.9 351.2C638.7 348.3 666.1 344.4 680.0 343.1C693.9 341.9 701.8 343.0 711.2 343.7C720.6 344.4 726.4 345.8 736.2 347.5C746.0 349.2 760.9 352.9 769.9 353.7C778.9 354.5 782.6 348.7 790.0 352.2C797.4 355.7 807.2 369.1 814.4 374.5C821.6 379.9 827.1 380.8 833.1 384.6C839.1 388.4 845.1 392.9 850.4 397.5C855.7 402.1 860.4 406.9 864.7 411.9C869.0 416.9 874.3 425.1 876.2 427.7L876.2 450.7C874.3 450.7 869.0 454.3 864.7 450.7C860.4 447.1 855.7 435.3 850.4 429.1C845.1 422.9 839.1 418.3 833.1 413.3C827.1 408.3 820.4 404.2 814.4 398.9C808.4 393.6 804.4 385.3 797.2 381.7C790.0 378.1 780.3 378.9 771.2 377.4C762.1 375.9 752.4 374.4 742.4 372.5C732.4 370.6 721.6 367.3 711.2 366.2C700.8 365.1 693.5 364.6 680.0 365.8C666.5 367.0 646.7 368.8 630.0 373.1C613.3 377.4 592.4 386.4 580.0 391.8C567.6 397.2 559.5 403.1 555.4 405.3Z" fill="url(#bwall)"/>
<path d="M627.3 350.2C627.2 347.4 627.9 347.1 629.0 346.0C630.1 344.9 635.7 340.3 638.3 339.3C640.9 338.3 651.7 336.1 655.0 336.1C658.3 336.2 669.3 338.9 671.6 339.8C673.9 340.7 677.6 342.4 678.3 345.0C679.0 347.6 679.8 363.7 678.9 365.8C678.0 367.9 671.5 366.5 669.5 365.8C667.5 365.1 661.3 359.5 659.1 359.0C656.9 358.5 649.4 359.8 647.6 360.6C645.8 361.4 643.2 365.5 641.4 366.8C639.6 368.1 631.4 375.3 630.0 373.6C628.6 371.9 627.4 353.0 627.3 350.2Z" fill="url(#post)"/>
<path d="M770.0 353.7C770.9 351.1 778.0 351.3 780.0 351.2C782.0 351.1 787.7 351.7 790.0 352.2C792.3 352.7 800.7 354.8 802.9 355.8C805.1 356.8 810.5 360.8 811.6 362.0C812.7 363.2 813.7 364.3 814.0 368.0C814.3 371.7 815.8 396.7 814.4 398.9C813.0 401.1 801.7 392.0 800.0 390.3C798.3 388.6 798.2 383.1 797.2 381.7C796.2 380.3 791.7 376.7 790.0 376.0C788.3 375.3 781.9 374.9 780.0 375.0C778.1 375.1 772.2 379.5 771.2 377.4C770.2 375.3 769.1 356.3 770.0 353.7Z" fill="url(#post)"/>
<path d="M876.2 427.7C877.6 426.0 888.1 431.4 890.6 433.4C893.1 435.4 899.6 445.6 900.7 447.8C901.8 450.0 902.5 453.1 902.0 455.0C901.5 456.9 897.0 465.3 895.3 466.8C893.6 468.3 887.0 469.3 885.2 470.0C883.4 470.7 877.8 475.4 876.9 473.5C876.0 471.6 876.3 455.3 876.2 450.7C876.1 446.1 874.8 429.4 876.2 427.7Z" fill="url(#post)"/>
<path d="M503.2 420.3C506.1 419.9 508.7 442.1 509.1 445.1C509.5 448.1 508.9 447.4 507.0 450.0C505.1 452.6 492.6 466.9 489.7 471.6C486.8 476.4 479.9 492.0 478.2 497.5C476.5 503.0 473.1 520.0 472.4 526.2C471.7 532.5 471.5 554.9 471.1 560.0C470.7 565.1 469.0 572.4 468.7 577.2C468.4 582.0 468.8 607.0 467.8 607.9C466.9 608.8 461.0 590.7 459.2 585.9C457.4 581.1 450.9 566.0 450.1 560.0C449.3 554.0 451.0 532.5 451.6 526.2C452.2 520.0 455.0 503.2 456.6 497.5C458.2 491.8 465.8 473.5 468.1 468.7C470.4 463.9 476.5 454.2 480.0 449.4C483.5 444.6 500.3 420.7 503.2 420.3Z" fill="url(#cres)"/>
<path d="M502.1 409.6C501.8 405.2 504.7 402.7 505.9 401.0C507.1 399.3 512.6 393.6 514.5 392.3C516.4 391.0 522.7 388.5 525.3 388.0C527.9 387.5 537.3 387.6 540.3 386.9C543.3 386.1 553.9 378.7 555.4 380.5C556.9 382.3 556.3 402.2 555.4 405.3C554.5 408.4 548.7 411.3 546.8 411.7C544.9 412.1 537.9 409.6 536.0 409.6C534.1 409.6 528.9 410.6 527.4 411.7C525.9 412.8 522.0 418.5 521.5 420.3C521.0 422.1 523.2 427.5 522.0 430.0C520.8 432.5 511.1 447.1 509.1 445.1C507.1 443.1 502.4 414.0 502.1 409.6Z" fill="url(#post)"/>
<path d="M876.9 473.5 L895.3 466.8 L900.3 498.7 L900.3 523.8 L898.7 540.6 L884.6 548.0 L882.7 520.0 L880.0 490.0Z" fill="url(#rw)"/>
<path d="M895.3 466.8C895.8 468.5 899.8 493.0 900.3 498.7C900.8 504.4 900.5 519.6 900.3 523.8C900.1 528.0 899.2 541.4 898.7 540.6C898.2 539.8 895.6 521.3 895.3 515.4C895.0 509.5 895.3 486.8 895.3 481.9C895.3 477.0 894.8 465.1 895.3 466.8Z" fill="#605670"/>
<path d="M478.3 591.1C480.5 599.2 488.1 630.2 491.7 640.0C495.3 649.8 493.8 644.1 500.0 649.7C506.2 655.3 519.1 667.2 528.7 673.6C538.3 680.0 549.0 684.4 557.5 688.0C566.0 691.6 568.9 692.6 580.0 695.3C591.1 698.0 610.7 702.1 624.0 704.0C637.3 705.9 647.6 706.9 660.0 706.8C672.4 706.7 685.0 705.2 698.3 703.2C711.6 701.2 726.7 699.0 740.0 694.9C753.3 690.8 768.3 683.0 778.3 678.4C788.3 673.8 793.2 671.2 800.0 667.5C806.8 663.8 812.8 660.3 819.2 656.0C825.6 651.7 831.9 647.5 838.3 641.6C844.7 635.7 852.7 625.8 857.5 620.5C862.3 615.2 863.7 614.2 867.0 610.0C870.3 605.8 874.6 599.9 877.5 595.4C880.4 590.9 883.1 588.8 884.4 582.9C885.7 577.0 885.1 578.8 885.2 560.0C885.3 541.2 885.2 485.0 885.2 470.0L882.7 470.0C882.7 485.0 884.7 541.7 882.7 560.0C880.7 578.3 874.6 573.4 870.8 580.0C867.0 586.6 863.0 594.4 860.0 599.4C857.0 604.4 855.2 606.3 852.7 610.0C850.2 613.7 849.0 617.0 845.0 621.5C841.0 626.0 833.8 632.3 828.7 636.8C823.6 641.3 819.2 644.6 814.4 648.3C809.6 652.0 806.0 655.0 800.0 658.9C794.0 662.8 788.3 666.9 778.3 671.7C768.3 676.5 753.3 683.4 740.0 687.5C726.7 691.6 711.6 694.5 698.3 696.5C685.0 698.5 672.4 699.2 660.0 699.4C647.6 699.5 637.3 699.6 624.0 697.4C610.7 695.2 591.1 689.6 580.0 686.0C568.9 682.4 565.8 680.1 557.5 675.6C549.2 671.1 539.0 666.0 530.0 659.0C521.0 652.0 510.1 641.5 503.3 633.6C496.5 625.7 491.4 615.3 489.0 611.6Z" fill="url(#band2)"/>
<path d="M533.7 345.0 L591.2 322.5 L592.4 328.7 L537.5 351.2Z" fill="#b088d8"/>
<path d="M592.4 322.5 L614.9 354.9 L614.9 362.4 L592.4 328.7Z" fill="#6c5c84"/>
<path d="M521.2 357.4 L531.8 374.9 L525.0 376.2Z" fill="#6c5c84"/>
<path d="M518.7 343.1C520.2 339.7 516.8 337.9 528.1 332.4C539.4 326.8 574.9 313.6 586.6 309.9C598.3 306.3 595.3 309.9 598.4 310.7C601.5 311.4 601.3 310.1 605.2 314.6C609.2 319.0 621.9 337.4 621.9 337.4C621.9 337.4 632.7 329.6 638.7 327.4C644.7 325.3 651.1 324.0 657.9 324.4C664.8 324.8 670.9 328.3 679.8 329.8C688.6 331.2 700.6 331.9 711.0 333.2C721.4 334.5 732.4 335.9 742.2 337.5C752.0 339.0 761.8 341.8 769.8 342.5C777.7 343.2 783.0 341.3 789.9 341.8C796.8 342.3 805.5 343.0 811.1 345.5C816.7 348.0 820.3 353.1 823.5 356.7C826.8 360.2 825.8 362.3 830.8 366.9C835.9 371.4 847.4 378.8 853.9 384.1C860.3 389.4 864.5 393.4 869.6 398.4C874.6 403.5 879.3 410.5 884.1 414.3C888.9 418.2 894.3 419.0 898.5 421.6C902.7 424.2 906.2 426.9 909.0 430.0C911.9 433.1 914.2 434.5 915.9 440.4C917.5 446.2 918.5 451.8 919.1 465.1C919.7 478.3 919.6 501.7 919.7 520.0C919.8 538.3 920.3 563.3 920.0 575.0C919.7 586.6 918.4 585.0 917.7 589.8C917.0 594.7 917.3 597.4 915.7 604.1C914.1 610.8 911.0 621.9 908.2 629.8C905.4 637.7 902.0 644.8 898.8 651.4C895.6 658.0 893.5 661.6 889.1 669.4C884.7 677.1 879.6 688.4 872.4 697.8C865.2 707.2 854.7 718.5 845.9 725.7C837.0 732.9 828.8 735.8 819.4 740.9C810.0 745.9 799.4 751.3 789.5 755.8C779.5 760.3 766.8 765.1 759.5 767.8C752.3 770.5 755.3 769.8 746.2 772.0C737.0 774.3 718.5 779.3 704.7 781.4C690.9 783.6 677.0 785.1 663.2 784.9C649.4 784.7 636.5 783.3 621.9 780.3C607.2 777.4 588.2 771.7 575.4 767.1C562.7 762.5 555.5 758.4 545.4 752.8C535.4 747.1 524.0 739.7 515.1 733.2C506.1 726.6 498.7 720.9 491.9 713.5C485.0 706.1 480.4 701.5 474.2 688.7C467.9 675.9 460.0 653.7 454.2 636.8C448.4 619.9 442.9 602.0 439.3 587.5C435.6 573.0 433.0 562.5 432.3 549.9C431.6 537.3 432.8 524.3 434.9 512.0C437.0 499.8 439.4 488.3 444.9 476.4C450.4 464.6 461.7 449.6 467.8 440.7C473.8 431.8 477.8 428.9 481.1 423.1C484.4 417.3 485.0 411.1 487.7 405.9C490.3 400.7 492.9 396.5 497.1 392.2C501.3 388.0 508.5 383.3 513.0 380.5C517.4 377.7 523.8 375.1 523.8 375.1C523.8 375.1 519.6 357.6 518.8 352.2C517.9 346.9 517.1 346.4 518.7 343.1Z" fill="none" stroke="#1e6ef2" stroke-width="2.6" stroke-linejoin="round"/>
<ellipse cx="679" cy="527.9" rx="131.8" ry="104.4" transform="rotate(-9.5 679 527.9)" fill="none" stroke="#9a72c2" stroke-width="1.4"/>
<path d="M579.5 543.6C582.9 549.5 592.4 570.7 599.8 579.0C607.2 587.3 610.3 589.4 623.7 593.4C637.1 597.4 663.4 603.4 680.0 603.0C696.6 602.6 710.5 596.3 723.1 591.1C735.7 585.9 746.8 580.7 755.4 571.7C764.0 562.7 771.6 543.0 774.8 537.2" fill="none" stroke="#9a72c2" stroke-width="1.4"/>
<g fill="none" stroke="#a47ccc" stroke-width="2.4" stroke-linecap="round" transform="translate(0.7 0.7)"><path d="M527.9 423.1C533.2 426.8 553.4 440.5 560.0 445.0C566.6 449.5 564.4 450.1 567.4 450.1C570.4 450.1 576.1 445.8 577.8 444.9"/><path d="M591.3 400.2C592.8 402.5 597.4 410.2 600.0 414.0C602.6 417.8 604.7 421.4 607.0 423.1C609.3 424.8 611.6 424.7 614.0 424.0C616.4 423.3 620.2 419.8 621.5 418.9"/><path d="M499.8 474.1C504.8 475.6 523.2 481.1 530.0 483.0C536.8 484.9 537.3 486.1 540.4 485.5C543.5 484.9 547.3 480.3 548.7 479.3"/><path d="M727.4 376.2C726.8 379.3 725.2 389.8 724.0 395.0C722.8 400.2 722.0 405.2 720.0 407.5C718.0 409.8 714.7 409.2 712.0 409.0C709.3 408.8 705.1 406.7 703.7 406.2"/><path d="M791.1 385.0C787.6 389.2 774.8 404.2 770.0 410.0C765.2 415.8 764.7 418.2 762.4 420.0C760.1 421.8 757.9 421.2 756.0 421.0C754.1 420.8 752.0 419.1 751.2 418.7"/><path d="M828.6 426.2C824.7 428.5 810.4 436.9 805.0 440.0C799.6 443.1 798.4 444.3 796.1 445.0C793.8 445.7 792.2 444.6 791.0 444.0C789.8 443.4 789.0 441.7 788.6 441.2"/><path d="M877.3 464.9C869.4 466.9 839.6 474.5 830.0 477.0C820.4 479.5 822.3 479.8 819.8 479.9C817.3 480.0 815.6 477.8 814.8 477.4"/><path d="M876.0 517.4C875.0 518.1 876.0 520.6 870.0 521.5C864.0 522.4 847.1 522.4 840.0 522.5C832.9 522.6 830.0 522.9 827.3 522.3C824.6 521.6 824.2 519.2 823.6 518.6"/><path d="M633.0 474.1C634.2 477.7 635.1 495.9 640.3 495.9C645.5 495.9 660.2 477.7 664.2 474.1"/><path d="M717.4 484.9C719.0 488.6 721.3 507.9 726.9 506.9C732.5 505.8 747.2 483.3 751.2 478.6"/><path d="M487.2 524.0C488.2 524.8 490.4 528.0 493.2 528.7C496.0 529.4 499.4 530.0 504.0 528.1C508.6 526.2 517.9 519.2 520.7 517.4"/><path d="M518.3 525.7C519.3 526.1 522.1 529.2 524.3 528.1C526.5 527.0 530.3 520.7 531.5 519.2"/><path d="M501.6 555.1C504.0 554.3 511.3 551.7 515.9 550.3C520.5 548.9 526.9 547.3 529.1 546.7"/><path d="M485.4 564.7C487.1 565.5 490.5 568.9 495.6 569.5C500.7 570.1 509.7 569.9 515.9 568.3C522.1 566.7 529.9 561.3 532.7 559.9"/><path d="M499.2 601.3C500.1 601.7 501.5 604.5 504.6 603.7C507.7 602.9 515.6 597.8 517.8 596.6"/><path d="M511.2 607.3C511.7 607.6 512.0 609.2 514.2 609.1C516.4 609.0 522.6 606.9 524.3 606.4"/><path d="M511.2 620.5C512.1 621.1 513.3 624.5 516.6 624.1C519.9 623.7 524.5 622.1 530.9 618.1C537.3 614.1 550.9 603.1 554.9 600.1"/><path d="M535.7 593.0C536.2 592.3 538.0 590.6 539.0 589.0C540.0 587.4 541.2 584.3 541.7 583.4"/><path d="M538.1 645.1C538.9 645.7 539.7 650.0 542.9 648.7C546.1 647.4 554.9 639.2 557.3 637.3"/><path d="M554.3 648.1C554.8 648.6 555.0 651.5 557.3 651.0C559.6 650.5 566.3 646.1 568.1 645.1"/><path d="M559.7 658.8C560.5 659.6 562.5 663.2 564.5 663.6C566.5 664.0 566.6 666.4 571.6 661.2C576.6 656.0 590.6 637.3 594.4 632.5"/><path d="M617.8 650.8C618.0 650.2 617.2 648.2 619.3 647.2C621.4 646.2 628.5 645.0 630.3 644.6"/><path d="M611.5 664.9C611.9 664.4 611.8 662.8 614.1 661.7C616.4 660.7 623.3 659.1 625.1 658.6"/><path d="M593.3 673.2C594.5 674.1 598.0 677.7 600.6 678.4C603.2 679.1 606.3 678.3 608.9 677.3C611.5 676.2 615.0 673.0 616.2 672.1"/><path d="M636.5 682.5C637.4 682.9 639.2 685.9 641.7 685.1C644.2 684.3 648.9 677.9 651.6 677.9C654.3 677.9 655.7 683.7 657.8 685.1C659.9 686.5 661.9 687.0 664.1 686.2C666.3 685.4 669.7 681.5 670.8 680.5"/><path d="M652.6 662.3C652.8 661.1 652.7 655.8 653.7 655.0C654.7 654.2 657.6 657.2 658.4 657.6"/><path d="M665.6 669.0C666.7 667.3 671.3 660.3 672.4 658.6"/><path d="M704.8 651.5C706.8 654.9 712.9 667.7 717.0 672.0C721.1 676.3 725.5 679.6 729.6 677.3C733.7 674.9 739.4 661.1 741.4 657.9"/><path d="M750.0 625.6C752.0 629.7 758.6 644.6 762.0 650.0C765.4 655.4 767.6 656.9 770.5 657.9C773.4 658.9 777.7 656.1 779.1 655.8"/><path d="M769.4 619.1C772.8 622.6 785.1 635.9 790.0 640.0C794.9 644.1 794.2 646.7 798.5 643.9C802.8 641.1 812.9 626.8 815.8 623.4"/><path d="M799.6 591.1C802.2 593.2 810.5 601.1 815.0 604.0C819.5 606.9 821.8 608.9 826.6 608.4C831.4 607.9 840.9 602.1 843.8 600.8"/><path d="M817.9 562.0C820.1 563.6 825.9 571.2 830.9 571.7C835.9 572.2 845.2 566.4 848.1 565.3"/><path d="M845.9 575.0C847.8 574.7 855.1 573.3 857.0 573.0"/><path d="M755.4 528.6C756.5 529.5 756.5 533.8 761.9 534.0C767.3 534.2 783.5 530.4 787.8 529.7"/><path d="M573.4 504.8C574.5 505.6 578.9 508.8 580.0 509.6"/><path d="M497.4 513.2C497.9 512.5 499.9 509.7 500.4 509.0"/><path d="M603.4 508.4C601.2 509.0 592.6 507.8 590.2 512.0C587.8 516.2 589.2 529.9 589.0 533.5"/></g>
<g fill="none" stroke="#70588e" stroke-width="0.9" stroke-linecap="round" transform="translate(-0.5 -0.5)"><path d="M527.9 423.1C533.2 426.8 553.4 440.5 560.0 445.0C566.6 449.5 564.4 450.1 567.4 450.1C570.4 450.1 576.1 445.8 577.8 444.9"/><path d="M591.3 400.2C592.8 402.5 597.4 410.2 600.0 414.0C602.6 417.8 604.7 421.4 607.0 423.1C609.3 424.8 611.6 424.7 614.0 424.0C616.4 423.3 620.2 419.8 621.5 418.9"/><path d="M499.8 474.1C504.8 475.6 523.2 481.1 530.0 483.0C536.8 484.9 537.3 486.1 540.4 485.5C543.5 484.9 547.3 480.3 548.7 479.3"/><path d="M727.4 376.2C726.8 379.3 725.2 389.8 724.0 395.0C722.8 400.2 722.0 405.2 720.0 407.5C718.0 409.8 714.7 409.2 712.0 409.0C709.3 408.8 705.1 406.7 703.7 406.2"/><path d="M791.1 385.0C787.6 389.2 774.8 404.2 770.0 410.0C765.2 415.8 764.7 418.2 762.4 420.0C760.1 421.8 757.9 421.2 756.0 421.0C754.1 420.8 752.0 419.1 751.2 418.7"/><path d="M828.6 426.2C824.7 428.5 810.4 436.9 805.0 440.0C799.6 443.1 798.4 444.3 796.1 445.0C793.8 445.7 792.2 444.6 791.0 444.0C789.8 443.4 789.0 441.7 788.6 441.2"/><path d="M877.3 464.9C869.4 466.9 839.6 474.5 830.0 477.0C820.4 479.5 822.3 479.8 819.8 479.9C817.3 480.0 815.6 477.8 814.8 477.4"/><path d="M876.0 517.4C875.0 518.1 876.0 520.6 870.0 521.5C864.0 522.4 847.1 522.4 840.0 522.5C832.9 522.6 830.0 522.9 827.3 522.3C824.6 521.6 824.2 519.2 823.6 518.6"/><path d="M633.0 474.1C634.2 477.7 635.1 495.9 640.3 495.9C645.5 495.9 660.2 477.7 664.2 474.1"/><path d="M717.4 484.9C719.0 488.6 721.3 507.9 726.9 506.9C732.5 505.8 747.2 483.3 751.2 478.6"/><path d="M487.2 524.0C488.2 524.8 490.4 528.0 493.2 528.7C496.0 529.4 499.4 530.0 504.0 528.1C508.6 526.2 517.9 519.2 520.7 517.4"/><path d="M518.3 525.7C519.3 526.1 522.1 529.2 524.3 528.1C526.5 527.0 530.3 520.7 531.5 519.2"/><path d="M501.6 555.1C504.0 554.3 511.3 551.7 515.9 550.3C520.5 548.9 526.9 547.3 529.1 546.7"/><path d="M485.4 564.7C487.1 565.5 490.5 568.9 495.6 569.5C500.7 570.1 509.7 569.9 515.9 568.3C522.1 566.7 529.9 561.3 532.7 559.9"/><path d="M499.2 601.3C500.1 601.7 501.5 604.5 504.6 603.7C507.7 602.9 515.6 597.8 517.8 596.6"/><path d="M511.2 607.3C511.7 607.6 512.0 609.2 514.2 609.1C516.4 609.0 522.6 606.9 524.3 606.4"/><path d="M511.2 620.5C512.1 621.1 513.3 624.5 516.6 624.1C519.9 623.7 524.5 622.1 530.9 618.1C537.3 614.1 550.9 603.1 554.9 600.1"/><path d="M535.7 593.0C536.2 592.3 538.0 590.6 539.0 589.0C540.0 587.4 541.2 584.3 541.7 583.4"/><path d="M538.1 645.1C538.9 645.7 539.7 650.0 542.9 648.7C546.1 647.4 554.9 639.2 557.3 637.3"/><path d="M554.3 648.1C554.8 648.6 555.0 651.5 557.3 651.0C559.6 650.5 566.3 646.1 568.1 645.1"/><path d="M559.7 658.8C560.5 659.6 562.5 663.2 564.5 663.6C566.5 664.0 566.6 666.4 571.6 661.2C576.6 656.0 590.6 637.3 594.4 632.5"/><path d="M617.8 650.8C618.0 650.2 617.2 648.2 619.3 647.2C621.4 646.2 628.5 645.0 630.3 644.6"/><path d="M611.5 664.9C611.9 664.4 611.8 662.8 614.1 661.7C616.4 660.7 623.3 659.1 625.1 658.6"/><path d="M593.3 673.2C594.5 674.1 598.0 677.7 600.6 678.4C603.2 679.1 606.3 678.3 608.9 677.3C611.5 676.2 615.0 673.0 616.2 672.1"/><path d="M636.5 682.5C637.4 682.9 639.2 685.9 641.7 685.1C644.2 684.3 648.9 677.9 651.6 677.9C654.3 677.9 655.7 683.7 657.8 685.1C659.9 686.5 661.9 687.0 664.1 686.2C666.3 685.4 669.7 681.5 670.8 680.5"/><path d="M652.6 662.3C652.8 661.1 652.7 655.8 653.7 655.0C654.7 654.2 657.6 657.2 658.4 657.6"/><path d="M665.6 669.0C666.7 667.3 671.3 660.3 672.4 658.6"/><path d="M704.8 651.5C706.8 654.9 712.9 667.7 717.0 672.0C721.1 676.3 725.5 679.6 729.6 677.3C733.7 674.9 739.4 661.1 741.4 657.9"/><path d="M750.0 625.6C752.0 629.7 758.6 644.6 762.0 650.0C765.4 655.4 767.6 656.9 770.5 657.9C773.4 658.9 777.7 656.1 779.1 655.8"/><path d="M769.4 619.1C772.8 622.6 785.1 635.9 790.0 640.0C794.9 644.1 794.2 646.7 798.5 643.9C802.8 641.1 812.9 626.8 815.8 623.4"/><path d="M799.6 591.1C802.2 593.2 810.5 601.1 815.0 604.0C819.5 606.9 821.8 608.9 826.6 608.4C831.4 607.9 840.9 602.1 843.8 600.8"/><path d="M817.9 562.0C820.1 563.6 825.9 571.2 830.9 571.7C835.9 572.2 845.2 566.4 848.1 565.3"/><path d="M845.9 575.0C847.8 574.7 855.1 573.3 857.0 573.0"/><path d="M755.4 528.6C756.5 529.5 756.5 533.8 761.9 534.0C767.3 534.2 783.5 530.4 787.8 529.7"/><path d="M573.4 504.8C574.5 505.6 578.9 508.8 580.0 509.6"/><path d="M497.4 513.2C497.9 512.5 499.9 509.7 500.4 509.0"/><path d="M603.4 508.4C601.2 509.0 592.6 507.8 590.2 512.0C587.8 516.2 589.2 529.9 589.0 533.5"/></g>
<path d="M668.5 433 L681.8 526.4" stroke="#1e6ff0" stroke-width="1.5"/>
<path d="M695 540 L858.1 561.6" stroke="#d81e28" stroke-width="1.7"/>
<path d="M678.2 552.6 L641.3 686.8" stroke="#24a025" stroke-width="1.5"/>
<path d="M658 403 L676 404.5 L678.8 407 L679.6 419 L677.5 431.5 L675.5 433.5 L657 433 L655 431 L653.4 419 L655 407Z" fill="#1e6ff0"/>
<path d="M673 525.7 L693 525.7 L695.1 538 L693 552.6 L673 552 L671 540Z" fill="#ffffff"/>
<path d="M860 549 L878 551 L880 562 L878 577 L859 576 L858.1 562Z" fill="#d81e28"/>
<path d="M627 685.9 L648 688 L651 700 L648 717 L627 715 L624.5 701Z" fill="#24a025"/>
</svg>
<svg width="92" height="98" style="position:absolute;left:0;top:0" viewBox="0 0 92 98">
<rect width="91" height="98" fill="#ffffff"/>
<path d="M14 0 H52 V20 Q52 30 62 30 H82 V86 Q82 93 75 93 H14 Q7 93 7 86 V7 Q7 0 14 0Z" fill="#3d46c8"/>
<path d="M56 1 L80 26 H63 Q56 26 56 19Z" fill="#3d46c8"/>
<rect x="-4" y="9.5" width="45" height="32.5" rx="5" fill="#ffffff"/>
<rect x="-4" y="13.5" width="41" height="24.5" rx="3" fill="#3d46c8"/>
<text x="1.8" y="31.2" font-family="Liberation Sans" font-weight="bold" font-size="14.6" textLength="23.4" lengthAdjust="spacingAndGlyphs" fill="#ffffff">STL</text>
<rect x="20" y="47" width="49" height="4.5" fill="#ffffff"/>
<rect x="20" y="62" width="49" height="4.5" fill="#ffffff"/>
<rect x="20" y="76" width="49" height="4.5" fill="#ffffff"/>
</svg>
<svg width="12" height="28" style="position:absolute;left:0;top:265px"><path d="M10 0 L0.5 14 L10 28" fill="#fff" stroke="#c8c8c8" stroke-width="1"/></svg>
<div id="panel">
 <div class="lbl" style="left:16px;top:27px;color:#e0203c">X</div>
 <div class="lbl" style="left:16px;top:68px;color:#2aa040">Y</div>
 <div class="lbl" style="left:16px;top:109px;color:#2060e0">Z</div>
 <div class="fld" style="left:33px;top:16px;width:179px;border-bottom-color:#a8a8a8"><span class="v">110.9478</span><span class="u">mm</span></div>
 <div class="fld" style="left:220px;top:16px;width:179px;border-bottom-color:#a8a8a8"><span class="v">100</span><span class="u">%</span></div>
 <div class="fld" style="left:33px;top:57px;width:179px;height:32px;border-bottom:1px solid #b4b4b4"><span class="v">113.3438</span><span class="u">mm</span></div>
 <div class="fld" style="left:220px;top:57px;width:179px;height:32px;border-bottom:1px solid #b4b4b4"><span class="v">100</span><span class="u">%</span></div>
 <div class="fld" style="left:33px;top:99px;width:179px;border-bottom:1px solid #b4b4b4"><span class="v">26</span><span class="u">mm</span></div>
 <div class="fld" style="left:220px;top:99px;width:179px;border-bottom:1px solid #b4b4b4"><span class="v">100</span><span class="u">%</span></div>
 <div class="cb" style="left:113px;top:151px"></div>
 <div class="ct" style="left:142px;top:154px">Snap Scaling</div>
 <div class="cb" style="left:113px;top:187px"></div>
 <div class="ct" style="left:142px;top:191px">Uniform Scaling</div>
</div>
<svg class="abs" style="left:0;top:0" width="961" height="835">
 <path d="M64.6 430.9 A9.8 9.8 0 1 0 74.4 420.4 L66.5 420.4" fill="none" stroke="#10104a" stroke-width="2.2" stroke-linecap="round"/>
 <path d="M70.8 415.3 L65.8 420.4 L70.8 425.4" fill="none" stroke="#10104a" stroke-width="2.2" stroke-linecap="round" stroke-linejoin="round"/>
 <path d="M130.3 445.2 L133 447.9 L137.3 443.1" fill="none" stroke="#1a2230" stroke-width="1.9" stroke-linecap="round" stroke-linejoin="round"/>
 <path d="M12.6 693.5 L17.4 688.8 L22.3 693.5" fill="none" stroke="#6a6a6a" stroke-width="1.8"/>
 <path d="M14 734 L25 723 L28.5 726.5 L17.5 737.5 L14 737.5Z" fill="#666"/>
 <rect x="12" y="737.5" width="18" height="1.6" fill="#666"/>
 <g fill="none" stroke="#666" stroke-width="2.3" stroke-linejoin="round">
  <path d="M25.7 793.2 L37.1 798.9 L37.1 813 L25.7 818.7 L14.2 813 L14.2 798.9Z M14.2 798.9 L25.7 804.1 L37.1 798.9 M25.7 804.1 L25.7 818.7"/>
  <path d="M71 800 L77.7 793.7 L60 793.7 L53.8 800 Z M77.7 793.7 L77.7 811 L71 817.1"/>
  <path d="M93 799.9 H111.7 V818 H93Z M111.7 799.9 L118 793.6 V811.5 L111.7 818"/>
  <path d="M140.4 799.9 H158 V818 H140.4Z M140.4 799.9 L133.6 793.6 H151.6 L158 799.9"/>
  <path d="M173.5 799.9 H191.6 V818 H173.5Z M173.5 799.9 L179.8 793.6 H197.9 L191.6 799.9"/>
 </g>
 <g fill="#666" stroke="#666" stroke-width="2.3" stroke-linejoin="round">
  <path d="M53.8 800 H71 V817.1 H53.8Z"/>
  <path d="M93 799.9 L99.8 793.6 H118 L111.7 799.9Z"/>
  <path d="M133.6 793.6 L140.4 799.9 V818 L133.6 811.5Z"/>
  <path d="M191.6 799.9 L197.9 793.6 V811.5 L191.6 818Z"/>
 </g>
</svg>
<div class="bl" style="left:42px;top:685px">Object list</div>
<div class="bl" style="left:50px;top:722px">STL1454</div>
<div class="bl" style="left:9px;top:755px">110.9 x 113.3 x 26.0 mm</div>
</body></html>
